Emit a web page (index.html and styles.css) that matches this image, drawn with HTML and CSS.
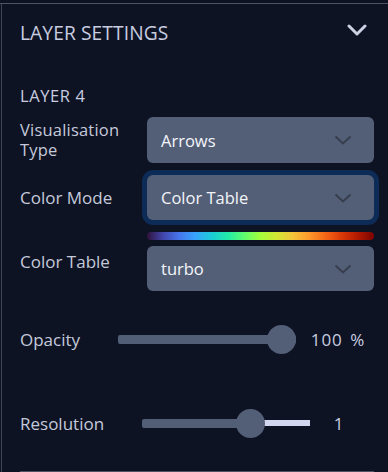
FILE: index.html
```html
<!DOCTYPE html>
<html>
<head>
<meta charset="utf-8">
<link rel="stylesheet" href="styles.css">
</head>
<body>
<div class="top-rule"></div>
<div class="panel">
  <div class="header">
    <span class="title">LAYER SETTINGS</span>
    <svg class="header-chevron" width="20" height="12" viewBox="0 0 20 12"><polyline points="2,2 10,10 18,2" fill="none" stroke="currentColor" stroke-width="3" stroke-linecap="round" stroke-linejoin="round"/></svg>
  </div>
  <div class="content">
    <div class="layer-title">LAYER 4</div>

    <div class="row row-vis">
      <div class="label label-two"><div>Visualisation</div><div>Type</div></div>
      <div class="select">
        <span>Arrows</span>
        <svg class="sel-chevron" width="18" height="10" viewBox="0 0 18 10"><polyline points="1.5,1.5 9,8.5 16.5,1.5" fill="none" stroke="currentColor" stroke-width="2"/></svg>
      </div>
    </div>

    <div class="row row-mode">
      <div class="label">Color Mode</div>
      <div class="select focused">
        <span>Color Table</span>
        <svg class="sel-chevron" width="18" height="10" viewBox="0 0 18 10"><polyline points="1.5,1.5 9,8.5 16.5,1.5" fill="none" stroke="currentColor" stroke-width="2"/></svg>
      </div>
    </div>

    <div class="row row-table">
      <div class="label">Color Table</div>
      <div class="group">
        <div class="gradient"></div>
        <div class="select">
          <span>turbo</span>
          <svg class="sel-chevron" width="18" height="10" viewBox="0 0 18 10"><polyline points="1.5,1.5 9,8.5 16.5,1.5" fill="none" stroke="currentColor" stroke-width="2"/></svg>
        </div>
      </div>
    </div>

    <div class="srow srow-opacity">
      <div class="slabel slabel-opacity">Opacity</div>
      <div class="slider slider-opacity">
        <div class="fill" style="width:178px"></div>
        <div class="thumb" style="left:149px"></div>
      </div>
      <div class="value">100 %</div>
    </div>

    <div class="srow srow-res">
      <div class="slabel slabel-res">Resolution</div>
      <div class="slider slider-res">
        <div class="fill" style="width:108px"></div>
        <div class="rest"></div>
        <div class="thumb" style="left:93.5px"></div>
      </div>
      <div class="value">1</div>
    </div>

    <div class="bottom-rule"></div>
  </div>
</div>
</body>
</html>
```

FILE: styles.css
```css
html, body {
  margin: 0;
  padding: 0;
  background: #0e1324;
  height: 100%;
  overflow: hidden;
}
body {
  padding-top: 3px;
  box-sizing: border-box;
  font-family: "Open Sans", "Noto Sans", sans-serif;
  color: #c5cadb;
}
.top-rule {
  height: 1px;
  background: #4b5467;
}
.panel {
  margin-left: 1px;
  border-left: 1px solid #3d4557;
  height: 100%;
}
.header {
  height: 58px;
  display: flex;
  align-items: center;
  justify-content: space-between;
  padding: 0 21px 0 18px;
}
.title {
  font-size: 19.2px;
  line-height: 24px;
  color: #c8cde0;
  letter-spacing: 0.1px;
}
.header-chevron {
  color: #ccd2e4;
  margin-bottom: 7px;
}
.content {
  padding: 0 14px 0 18px;
  display: flex;
  flex-direction: column;
}
.layer-title {
  margin-top: 24px;
  font-size: 16.5px;
  line-height: 20px;
  letter-spacing: 0.6px;
  color: #c8cde0;
}
.row {
  display: flex;
  align-items: center;
}
.row-vis { margin-top: 11px; }
.row-mode { margin-top: 12px; }
.row-table { margin-top: 12px; }
.label {
  width: 127px;
  flex: none;
  font-size: 17px;
  line-height: 20px;
  color: #c5cadb;
}
.label-two {
  font-size: 16.5px;
  line-height: 20px;
  letter-spacing: 0.2px;
}
.select {
  width: 227px;
  height: 46px;
  box-sizing: border-box;
  background: #535f76;
  border-radius: 6px;
  display: flex;
  align-items: center;
  justify-content: space-between;
  padding: 0 22px 0 14px;
  font-size: 16.5px;
  color: #f3f5fb;
}
.select.focused {
  height: 45px;
  box-shadow: 0 0 0 5px #0d2b57;
}
.group .select { height: 45px; }
.sel-chevron {
  color: #363d4d;
}
.group {
  display: flex;
  flex-direction: column;
}
.gradient {
  width: 227px;
  height: 8px;
  border-radius: 4px;
  margin-bottom: 6px;
  background: linear-gradient(to right, #30123b, #4145ab 7%, #4675ed 14%, #39a2fc 21%, #1bcfd4 29%, #24eca6 36%, #61fc6c 43%, #a4fc3b 50%, #d1e834 57%, #f3c63a 64%, #fe9b2d 71%, #f36315 79%, #d93806 86%, #b11901 93%, #7a0402);
}
.srow {
  display: flex;
  align-items: center;
  height: 30px;
  padding-right: 6px;
}
.srow-opacity { margin-top: 33px; }
.srow-res { margin-top: 54px; }
.slabel {
  flex: none;
  font-size: 17px;
  color: #c5cadb;
}
.slabel-opacity { width: 98px; }
.slabel-res { width: 122px; }
.slider {
  position: relative;
  height: 30px;
  display: flex;
  align-items: center;
  flex: none;
}
.slider-opacity { width: 178px; }
.slider-res { width: 168px; }
.fill {
  height: 9px;
  background: #525e75;
  border-radius: 2px;
}
.rest {
  flex: 1;
  height: 6px;
  background: #d3d6ef;
}
.thumb {
  position: absolute;
  top: 0.5px;
  width: 29px;
  height: 29px;
  border-radius: 50%;
  background: #535f76;
}
.value {
  margin-left: auto;
  width: 60px;
  text-align: center;
  font-size: 17px;
  letter-spacing: 1px;
  word-spacing: 2px;
  white-space: nowrap;
  color: #c8cde0;
}
.bottom-rule {
  margin-top: 33px;
  height: 1px;
  background: #4b5467;
}
```
